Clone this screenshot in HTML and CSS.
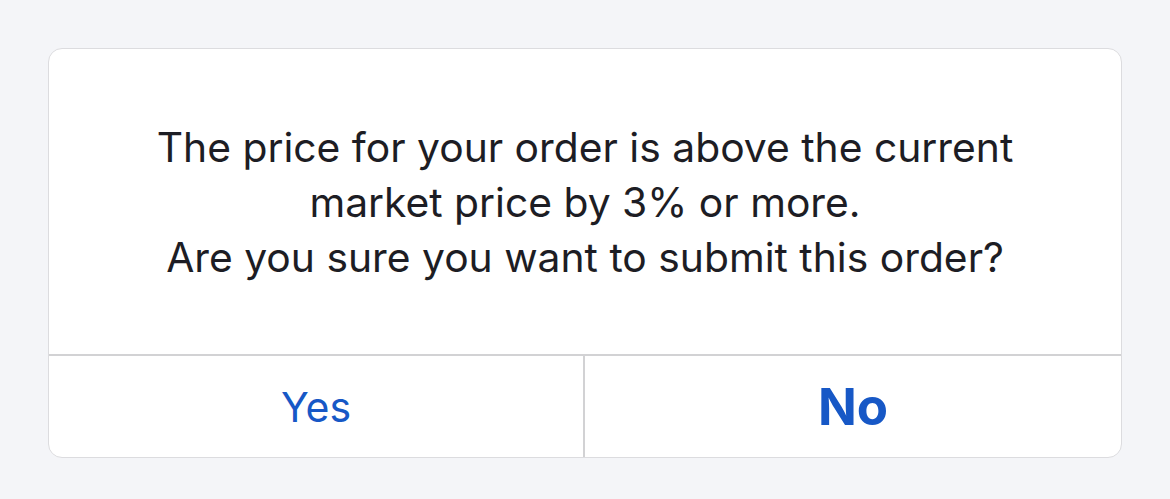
FILE: index.html
```html
<!DOCTYPE html>
<html>
<head>
<meta charset="utf-8">
<link rel="stylesheet" href="styles.css">
</head>
<body>
<div class="page">
  <div class="dialog">
    <div class="message">
      <p>The price for your order is above the current<br>market price by 3% or more.<br>Are you sure you want to submit this order?</p>
    </div>
    <div class="actions">
      <button class="btn yes">Yes</button>
      <button class="btn no">No</button>
    </div>
  </div>
</div>
</body>
</html>
```

FILE: styles.css
```css
html, body {
  margin: 0;
  padding: 0;
  width: 1170px;
  height: 499px;
  overflow: hidden;
}
body {
  background: #f4f5f8;
  font-family: Inter, "Noto Sans", sans-serif;
}
.page {
  padding: 48px 48px 0 48px;
}
.dialog {
  width: 1072px;
  height: 408px;
  background: #ffffff;
  border: 1px solid #dcdcdf;
  border-radius: 14px;
  display: flex;
  flex-direction: column;
  overflow: hidden;
}
.message {
  height: 305px;
  display: flex;
  align-items: center;
  justify-content: center;
  border-bottom: 2px solid #d2d2d4;
}
.message p {
  margin: 0;
  text-align: center;
  font-size: 40.8px;
  line-height: 55px;
  color: #1d1d24;
  padding-top: 2px;
}
.actions {
  flex: 1;
  display: flex;
}
.btn {
  flex: 1;
  border: 0;
  background: transparent;
  font-family: Inter, "Noto Sans", sans-serif;
  color: #1758c6;
  padding: 0;
}
.yes {
  font-weight: 400;
  font-size: 41px;
  flex: 0 0 536px;
  border-right: 2px solid #d2d2d4;
}
.no {
  font-weight: 700;
  font-size: 51px;
}
```
